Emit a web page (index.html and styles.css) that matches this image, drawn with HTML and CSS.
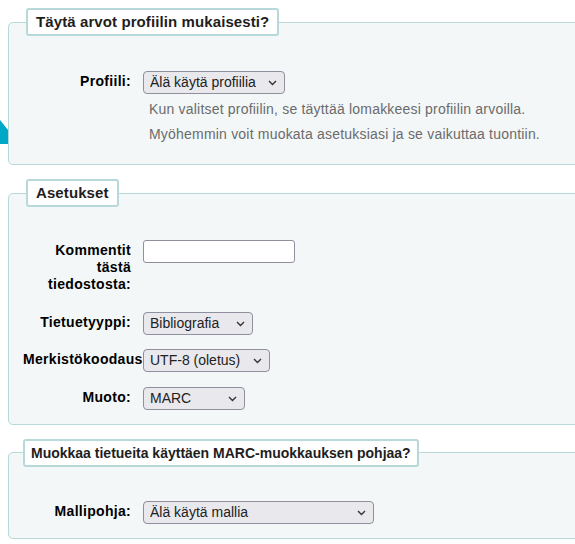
FILE: index.html
```html
<!DOCTYPE html>
<html lang="fi">
<head>
<meta charset="utf-8">
<title>Tuonti</title>
<link rel="stylesheet" href="styles.css">
</head>
<body>
<div class="page">
  <svg class="deco" width="8" height="28" viewBox="0 0 8 28" aria-hidden="true"><polygon points="0,2 8,12 8,26 0,26" fill="#00a8c8"/></svg>

  <fieldset class="rows rows-first">
    <legend>Täytä arvot profiilin mukaisesti?</legend>
    <ol class="list">
      <li class="row">
        <label class="lbl" for="profile">Profiili:</label>
        <div class="field">
          <span class="selwrap"><select id="profile" class="sel sel-profile"><option>Älä käytä profiilia</option></select><svg class="chev" width="9" height="6" viewBox="0 0 9 6" aria-hidden="true"><path d="M1 1 L4.5 4.5 L8 1" fill="none" stroke="#333" stroke-width="1.4"/></svg></span>
          <div class="hint hint-first">Kun valitset profiilin, se täyttää lomakkeesi profiilin arvoilla.</div>
          <div class="hint">Myöhemmin voit muokata asetuksiasi ja se vaikuttaa tuontiin.</div>
        </div>
      </li>
    </ol>
  </fieldset>

  <fieldset class="rows rows-settings">
    <legend>Asetukset</legend>
    <ol class="list">
      <li class="row">
        <label class="lbl" for="comments">Kommentit tästä tiedostosta:</label>
        <div class="field"><input id="comments" class="txt" type="text"></div>
      </li>
      <li class="row">
        <label class="lbl" for="rtype">Tietuetyyppi:</label>
        <div class="field"><span class="selwrap"><select id="rtype" class="sel sel-type"><option>Bibliografia</option></select><svg class="chev" width="9" height="6" viewBox="0 0 9 6" aria-hidden="true"><path d="M1 1 L4.5 4.5 L8 1" fill="none" stroke="#333" stroke-width="1.4"/></svg></span></div>
      </li>
      <li class="row">
        <label class="lbl" for="enc">Merkistökoodaus</label>
        <div class="field"><span class="selwrap"><select id="enc" class="sel sel-enc"><option>UTF-8 (oletus)</option></select><svg class="chev" width="9" height="6" viewBox="0 0 9 6" aria-hidden="true"><path d="M1 1 L4.5 4.5 L8 1" fill="none" stroke="#333" stroke-width="1.4"/></svg></span></div>
      </li>
      <li class="row">
        <label class="lbl" for="fmt">Muoto:</label>
        <div class="field"><span class="selwrap"><select id="fmt" class="sel sel-fmt"><option>MARC</option></select><svg class="chev" width="9" height="6" viewBox="0 0 9 6" aria-hidden="true"><path d="M1 1 L4.5 4.5 L8 1" fill="none" stroke="#333" stroke-width="1.4"/></svg></span></div>
      </li>
    </ol>
  </fieldset>

  <fieldset class="rows rows-alt">
    <legend>Muokkaa tietueita käyttäen MARC-muokkauksen pohjaa?</legend>
    <ol class="list">
      <li class="row">
        <label class="lbl" for="tpl">Mallipohja:</label>
        <div class="field"><span class="selwrap"><select id="tpl" class="sel sel-tpl"><option>Älä käytä mallia</option></select><svg class="chev" width="9" height="6" viewBox="0 0 9 6" aria-hidden="true"><path d="M1 1 L4.5 4.5 L8 1" fill="none" stroke="#333" stroke-width="1.4"/></svg></span></div>
      </li>
    </ol>
  </fieldset>
</div>
</body>
</html>
```

FILE: styles.css
```css
html, body {
  margin: 0;
  padding: 0;
  overflow: hidden;
  background: #ffffff;
}
body {
  font-family: "Liberation Sans", Arial, sans-serif;
  font-size: 13px;
  color: #000;
}
.page {
  position: relative;
  padding: 8px 0 0 8px;
}
.deco {
  position: absolute;
  left: 0;
  top: 118px;
  display: block;
}
.rows {
  position: relative;
  margin: 0 -40px 14px 0;
  padding: 35px 0 14px 14px;
  border: 1px solid #b7d9da;
  border-radius: 5px;
  background: #f3f7f8;
  min-width: 0;
}
.rows-first {
  padding-bottom: 17px;
}
.rows-settings {
  padding-top: 33px;
}
.rows legend {
  margin-left: 3px;
  padding: 4px 8px;
  background: #fff;
  border: 2px solid #b7d9da;
  border-radius: 3px;
  font-size: 15px;
  line-height: 16px;
  font-weight: bold;
  color: #1e1e1e;
  letter-spacing: 0.1px;
}
.rows-alt {
  padding-top: 34px;
}
.rows-alt legend {
  margin-left: 0;
  padding: 4px 6px;
  font-size: 14px;
  letter-spacing: 0;
}
.list {
  list-style: none;
  margin: 0;
  padding: 0;
}
.row {
  display: flex;
  align-items: flex-start;
  gap: 12px;
  margin-bottom: 14.5px;
}
.row:last-child {
  margin-bottom: 0;
}
.lbl {
  flex: 0 0 108px;
  width: 108px;
  text-align: right;
  font-weight: bold;
  font-size: 14px;
  letter-spacing: 0.3px;
  line-height: 17px;
  padding-top: 2px;
  padding-bottom: 4px;
}
.field {
  display: flex;
  flex-direction: column;
  align-items: flex-start;
}
.selwrap {
  position: relative;
  display: inline-block;
  line-height: 0;
}
.sel {
  -webkit-appearance: none;
  appearance: none;
  box-sizing: border-box;
  height: 23px;
  font-family: "Liberation Sans", Arial, sans-serif;
  font-size: 14px;
  line-height: 21px;
  color: #222;
  background-color: #e9e9ed;
  border: 1px solid #8f8f9d;
  border-radius: 4px;
  padding: 0 20px 0 6px;
  margin: 0;
}
.chev {
  position: absolute;
  right: 8px;
  top: 9px;
  pointer-events: none;
}
.sel-profile { width: 142px; }
.sel-type { width: 110px; }
.sel-enc { width: 127px; }
.sel-fmt { width: 102px; }
.sel-tpl { width: 231px; }
.txt {
  width: 152px;
  height: 23px;
  box-sizing: border-box;
  border: 1px solid #8f8f9d;
  border-radius: 3px;
  background: #fff;
  margin: 0;
  padding: 0 4px;
}
.hint {
  font-size: 14px;
  line-height: 25px;
  letter-spacing: 0.2px;
  color: #6b6b6b;
  padding-left: 6px;
}
.hint-first {
  margin-top: 3px;
}
```
